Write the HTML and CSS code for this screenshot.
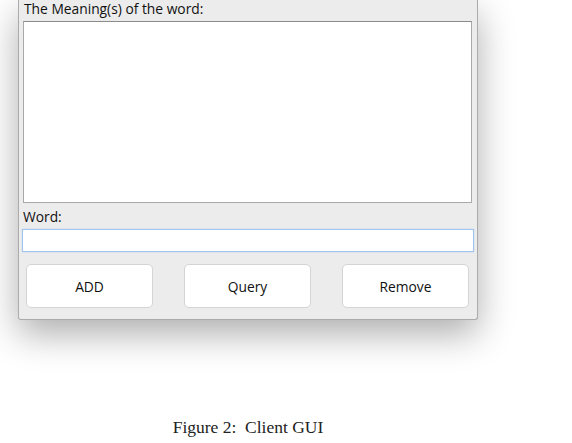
FILE: index.html
```html
<!DOCTYPE html>
<html lang="en">
<head>
    <meta charset="UTF-8" />
    <title>Client GUI</title>
    <link rel="stylesheet" href="styles.css">
</head>
<body>
    <div class="figure">
        <div class="window">
            <div class="field-label">The Meaning(s) of the word:</div>
            <div class="meaning-box"></div>
            <div class="field-label word-label">Word:</div>
            <div class="word-input"></div>
            <div class="button-row">
                <button type="button" class="gui-btn">ADD</button>
                <button type="button" class="gui-btn">Query</button>
                <button type="button" class="gui-btn">Remove</button>
            </div>
        </div>
        <p class="caption">Figure 2:&nbsp; Client GUI</p>
    </div>
</body>
</html>
```

FILE: styles.css
```css
body {
    margin: 0;
    padding: 0;
    background: #fff;
    font-family: 'Open Sans', Arial, sans-serif;
}
.figure {
    width: 496px;
}
.window {
    margin-left: 18px;
    width: 458px;
    height: 319px;
    background: #ececec;
    border: 1px solid #ababab;
    border-top: none;
    border-radius: 0 0 3px 3px;
    box-shadow: 0 14px 36px rgba(0,0,0,0.32);
    display: flex;
    flex-direction: column;
}
.field-label {
    font-size: 13.8px;
    line-height: 17px;
    color: #111;
    padding-left: 5px;
    height: 21px;
}
.word-label {
    padding-left: 4px;
    margin-top: 2px;
    height: 24px;
    line-height: 24px;
}
.meaning-box {
    margin-left: 4px;
    width: 447px;
    height: 180px;
    background: #fff;
    border: 1px solid #a9a9a9;
    border-top-color: #8c8c8c;
}
.word-input {
    margin-left: 3px;
    width: 450px;
    height: 21px;
    background: #fff;
    border: 1px solid #9ec5f1;
    box-shadow: 0 0 1px rgba(120,170,230,0.6);
}
.button-row {
    display: flex;
    gap: 31px;
    margin: 12px 0 0 7px;
}
.gui-btn {
    width: 127px;
    height: 44px;
    background: #fff;
    border: 1px solid #d4d4d4;
    border-radius: 5px;
    font-family: 'Open Sans', Arial, sans-serif;
    font-size: 13.8px;
    color: #111;
    padding: 0;
}
.caption {
    margin: 97px 0 0 0;
    text-align: center;
    font-family: 'Liberation Serif', 'Times New Roman', serif;
    font-size: 17.5px;
    color: #222;
}
```
